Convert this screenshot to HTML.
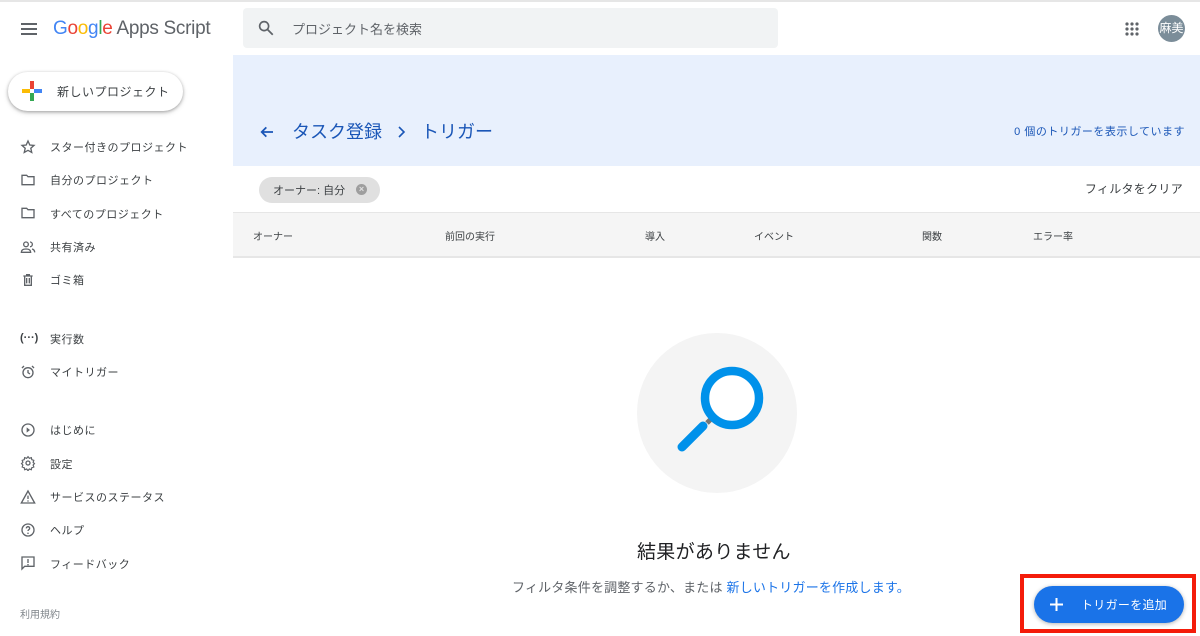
<!DOCTYPE html>
<html><head><meta charset="utf-8"><style>
*{box-sizing:border-box;margin:0;padding:0}
body{width:1200px;height:636px;overflow:hidden;background:#fff;font-family:"Liberation Sans","Noto Sans CJK JP",sans-serif;position:relative;color:#3c4043}
.a{position:absolute}
.nav{position:absolute;left:50px;font-size:11px;color:#3c4043;letter-spacing:.5px}
.ic{position:absolute;left:20px}
.th{position:absolute;top:228px;font-size:10px;color:#3c4043}
</style></head><body>
<div class="a" style="left:0;top:0;width:1200px;height:2px;background:#e6e6e6"></div>
<svg class="a" style="left:21px;top:23px" width="16" height="12"><rect y="0" width="16" height="2" fill="#5f6368"/><rect y="5" width="16" height="2" fill="#5f6368"/><rect y="10" width="16" height="2" fill="#5f6368"/></svg>
<div class="a" style="left:53px;top:18px;font-size:19px;letter-spacing:-.3px"><span style="color:#4285f4">G</span><span style="color:#ea4335">o</span><span style="color:#fbbc05">o</span><span style="color:#4285f4">g</span><span style="color:#34a853">l</span><span style="color:#ea4335">e</span> <span style="color:#5f6368">Apps Script</span></div>
<div class="a" style="left:243px;top:8px;width:535px;height:40px;background:#f1f3f4;border-radius:4px"></div>
<svg class="a" style="left:257px;top:19px" width="18" height="18" viewBox="0 0 24 24"><circle cx="9.5" cy="9.5" r="6" fill="none" stroke="#5f6368" stroke-width="2.2"/><path d="M14 14l7 7" stroke="#5f6368" stroke-width="2.4"/></svg>
<div class="a" style="left:292px;top:19px;font-size:13px;color:#5f6368">プロジェクト名を検索</div>
<svg class="a" style="left:1125px;top:22px" width="14" height="14"><g fill="#5f6368"><circle cx="2" cy="2" r="1.6"/><circle cx="7" cy="2" r="1.6"/><circle cx="12" cy="2" r="1.6"/><circle cx="2" cy="7" r="1.6"/><circle cx="7" cy="7" r="1.6"/><circle cx="12" cy="7" r="1.6"/><circle cx="2" cy="12" r="1.6"/><circle cx="7" cy="12" r="1.6"/><circle cx="12" cy="12" r="1.6"/></g></svg>
<div class="a" style="left:1158px;top:15px;width:27px;height:27px;border-radius:50%;background:#7b8d99;color:#fff;font-size:12px;line-height:27px;text-align:center">麻美</div>
<div class="a" style="left:8px;top:72px;width:175px;height:39px;border-radius:20px;background:#fff;box-shadow:0 1px 3px rgba(0,0,0,.3),0 2px 6px rgba(0,0,0,.12)"></div>
<svg class="a" style="left:22px;top:81px" width="20" height="20"><rect x="8" y="0" width="4" height="8" fill="#ea4335"/><rect x="12" y="8" width="8" height="4" fill="#4285f4"/><rect x="8" y="12" width="4" height="8" fill="#34a853"/><rect x="0" y="8" width="8" height="4" fill="#fbbc05"/></svg>
<div class="a" style="left:57px;top:83px;font-size:12px;color:#3c4043;letter-spacing:.5px">新しいプロジェクト</div>
<svg class="ic" style="top:139px" width="16" height="16" viewBox="0 0 24 24"><path d="M12 3l2.7 6 6.3.6-4.8 4.3 1.4 6.3L12 17l-5.6 3.2 1.4-6.3L3 9.6l6.3-.6z" fill="none" stroke="#5f6368" stroke-width="2"/></svg>
<div class="nav" style="top:139px">スター付きのプロジェクト</div>
<svg class="ic" style="top:172px" width="16" height="16" viewBox="0 0 24 24"><path d="M3 5h7l2 2h9v12H3z" fill="none" stroke="#5f6368" stroke-width="2"/></svg>
<div class="nav" style="top:172px">自分のプロジェクト</div>
<svg class="ic" style="top:205px" width="16" height="16" viewBox="0 0 24 24"><path d="M3 5h7l2 2h9v12H3z" fill="none" stroke="#5f6368" stroke-width="2"/></svg>
<div class="nav" style="top:206px">すべてのプロジェクト</div>
<svg class="ic" style="top:239px" width="16" height="16" viewBox="0 0 24 24"><circle cx="9" cy="8" r="3.5" fill="none" stroke="#5f6368" stroke-width="2"/><path d="M2 20c0-4 4-5 7-5s7 1 7 5zM15 4.5a3.5 3.5 0 010 7M18 15c2 .5 4 2 4 5" fill="none" stroke="#5f6368" stroke-width="2"/></svg>
<div class="nav" style="top:239px">共有済み</div>
<svg class="ic" style="top:272px" width="16" height="16" viewBox="0 0 24 24"><path d="M5 6h14M9 4h6M7 6v14h10V6M10 9v8M14 9v8" fill="none" stroke="#5f6368" stroke-width="2"/></svg>
<div class="nav" style="top:272px">ゴミ箱</div>
<div class="ic" style="top:332px;font-size:11px;font-weight:bold;color:#3c4043">(···)</div>
<div class="nav" style="top:331px">実行数</div>
<svg class="ic" style="top:364px" width="16" height="16" viewBox="0 0 24 24"><circle cx="12" cy="13" r="7.5" fill="none" stroke="#5f6368" stroke-width="2"/><path d="M12 9v4l3 2M3 6l3-3M21 6l-3-3" fill="none" stroke="#5f6368" stroke-width="2"/></svg>
<div class="nav" style="top:364px">マイトリガー</div>
<svg class="ic" style="top:422px" width="16" height="16" viewBox="0 0 24 24"><circle cx="12" cy="12" r="9" fill="none" stroke="#5f6368" stroke-width="2"/><path d="M10 8l5 4-5 4z" fill="#5f6368"/></svg>
<div class="nav" style="top:422px">はじめに</div>
<svg class="ic" style="top:455px" width="16" height="16" viewBox="0 0 24 24"><circle cx="12" cy="12" r="3" fill="none" stroke="#5f6368" stroke-width="2"/><path d="M12 2.5l2 2.5 3-1 .7 3 3 1-1 3 2 2-2 2 1 3-3 1-.7 3-3-1-2 2.5-2-2.5-3 1-.7-3-3-1 1-3-2-2 2-2-1-3 3-1 .7-3 3 1z" fill="none" stroke="#5f6368" stroke-width="1.8"/></svg>
<div class="nav" style="top:456px">設定</div>
<svg class="ic" style="top:489px" width="16" height="16" viewBox="0 0 24 24"><path d="M12 3L2 21h20z" fill="none" stroke="#5f6368" stroke-width="2"/><path d="M12 10v5M12 17v2" stroke="#5f6368" stroke-width="2"/></svg>
<div class="nav" style="top:489px">サービスのステータス</div>
<svg class="ic" style="top:522px" width="16" height="16" viewBox="0 0 24 24"><circle cx="12" cy="12" r="9" fill="none" stroke="#5f6368" stroke-width="2"/><path d="M9.5 9.5a2.5 2.5 0 115 0c0 2-2.5 2-2.5 4M12 16v2" fill="none" stroke="#5f6368" stroke-width="2"/></svg>
<div class="nav" style="top:522px">ヘルプ</div>
<svg class="ic" style="top:555px" width="16" height="16" viewBox="0 0 24 24"><path d="M3 3h18v14H7l-4 4z" fill="none" stroke="#5f6368" stroke-width="2"/><path d="M12 6v6M12 13.5v2" stroke="#5f6368" stroke-width="2"/></svg>
<div class="nav" style="top:556px">フィードバック</div>
<div class="a" style="left:20px;top:606px;font-size:10px;color:#80868b">利用規約</div>
<div class="a" style="left:233px;top:55px;width:967px;height:111px;background:#e8f0fd"></div>
<svg class="a" style="left:259px;top:124px" width="16" height="16" viewBox="0 0 24 24"><path d="M21 12H4M11 5l-7 7 7 7" fill="none" stroke="#1a56b7" stroke-width="2.6"/></svg>
<div class="a" style="left:292px;top:118px;font-size:18px;color:#1a56b7">タスク登録</div>
<svg class="a" style="left:397px;top:126px" width="10" height="12" viewBox="0 0 10 12"><path d="M2 1l5 5-5 5" fill="none" stroke="#1a56b7" stroke-width="1.6"/></svg>
<div class="a" style="left:421px;top:118px;font-size:18px;color:#1a56b7">トリガー</div>
<div class="a" style="right:15px;top:123px;font-size:11px;color:#1a56b7;letter-spacing:.5px">0 個のトリガーを表示しています</div>
<div class="a" style="left:259px;top:177px;width:121px;height:26px;border-radius:13px;background:#e0e0e0"></div>
<div class="a" style="left:273px;top:182px;font-size:11px;color:#3c4043">オーナー: 自分</div>
<div class="a" style="left:356px;top:184px;width:11px;height:11px;border-radius:50%;background:#9e9e9e;color:#e0e0e0;font-size:9px;line-height:11px;text-align:center;font-weight:bold">×</div>
<div class="a" style="right:17px;top:180px;font-size:12px;color:#3c4043;letter-spacing:.3px">フィルタをクリア</div>
<div class="a" style="left:233px;top:212px;width:967px;height:46px;background:#f5f5f5;border-top:1px solid #e6e6e6;border-bottom:2px solid #e6e6e6"></div>
<div class="th" style="left:253px">オーナー</div>
<div class="th" style="left:445px">前回の実行</div>
<div class="th" style="left:645px">導入</div>
<div class="th" style="left:754px">イベント</div>
<div class="th" style="left:922px">関数</div>
<div class="th" style="left:1033px">エラー率</div>
<svg class="a" style="left:636px;top:333px" width="162" height="162"><circle cx="81" cy="80" r="80" fill="#f4f4f4"/><path d="M77 84l-6 6" stroke="#757575" stroke-width="5"/><path d="M67 93l-21 21" stroke="#0091ea" stroke-width="9" stroke-linecap="round"/><circle cx="96" cy="65" r="27" fill="#fff" stroke="#0091ea" stroke-width="8.5"/></svg>
<div class="a" style="left:637px;top:537px;font-size:19px;color:#202124;letter-spacing:.3px">結果がありません</div>
<div class="a" style="left:512px;top:577px;font-size:13px;color:#5f6368;letter-spacing:.2px">フィルタ条件を調整するか、または <span style="color:#1a73e8">新しいトリガーを作成します。</span></div>
<div class="a" style="left:1020px;top:574px;width:176px;height:59px;border:4px solid #f41c0a"></div>
<div class="a" style="left:1034px;top:586px;width:150px;height:37px;border-radius:19px;background:#1a73e8;box-shadow:0 1px 4px rgba(0,0,0,.3)"></div>
<svg class="a" style="left:1050px;top:598px" width="13" height="13"><path d="M6.5 0v13M0 6.5h13" stroke="#fff" stroke-width="2"/></svg>
<div class="a" style="left:1081px;top:596px;font-size:12px;color:#fff;letter-spacing:.3px">トリガーを追加</div>
</body></html>
